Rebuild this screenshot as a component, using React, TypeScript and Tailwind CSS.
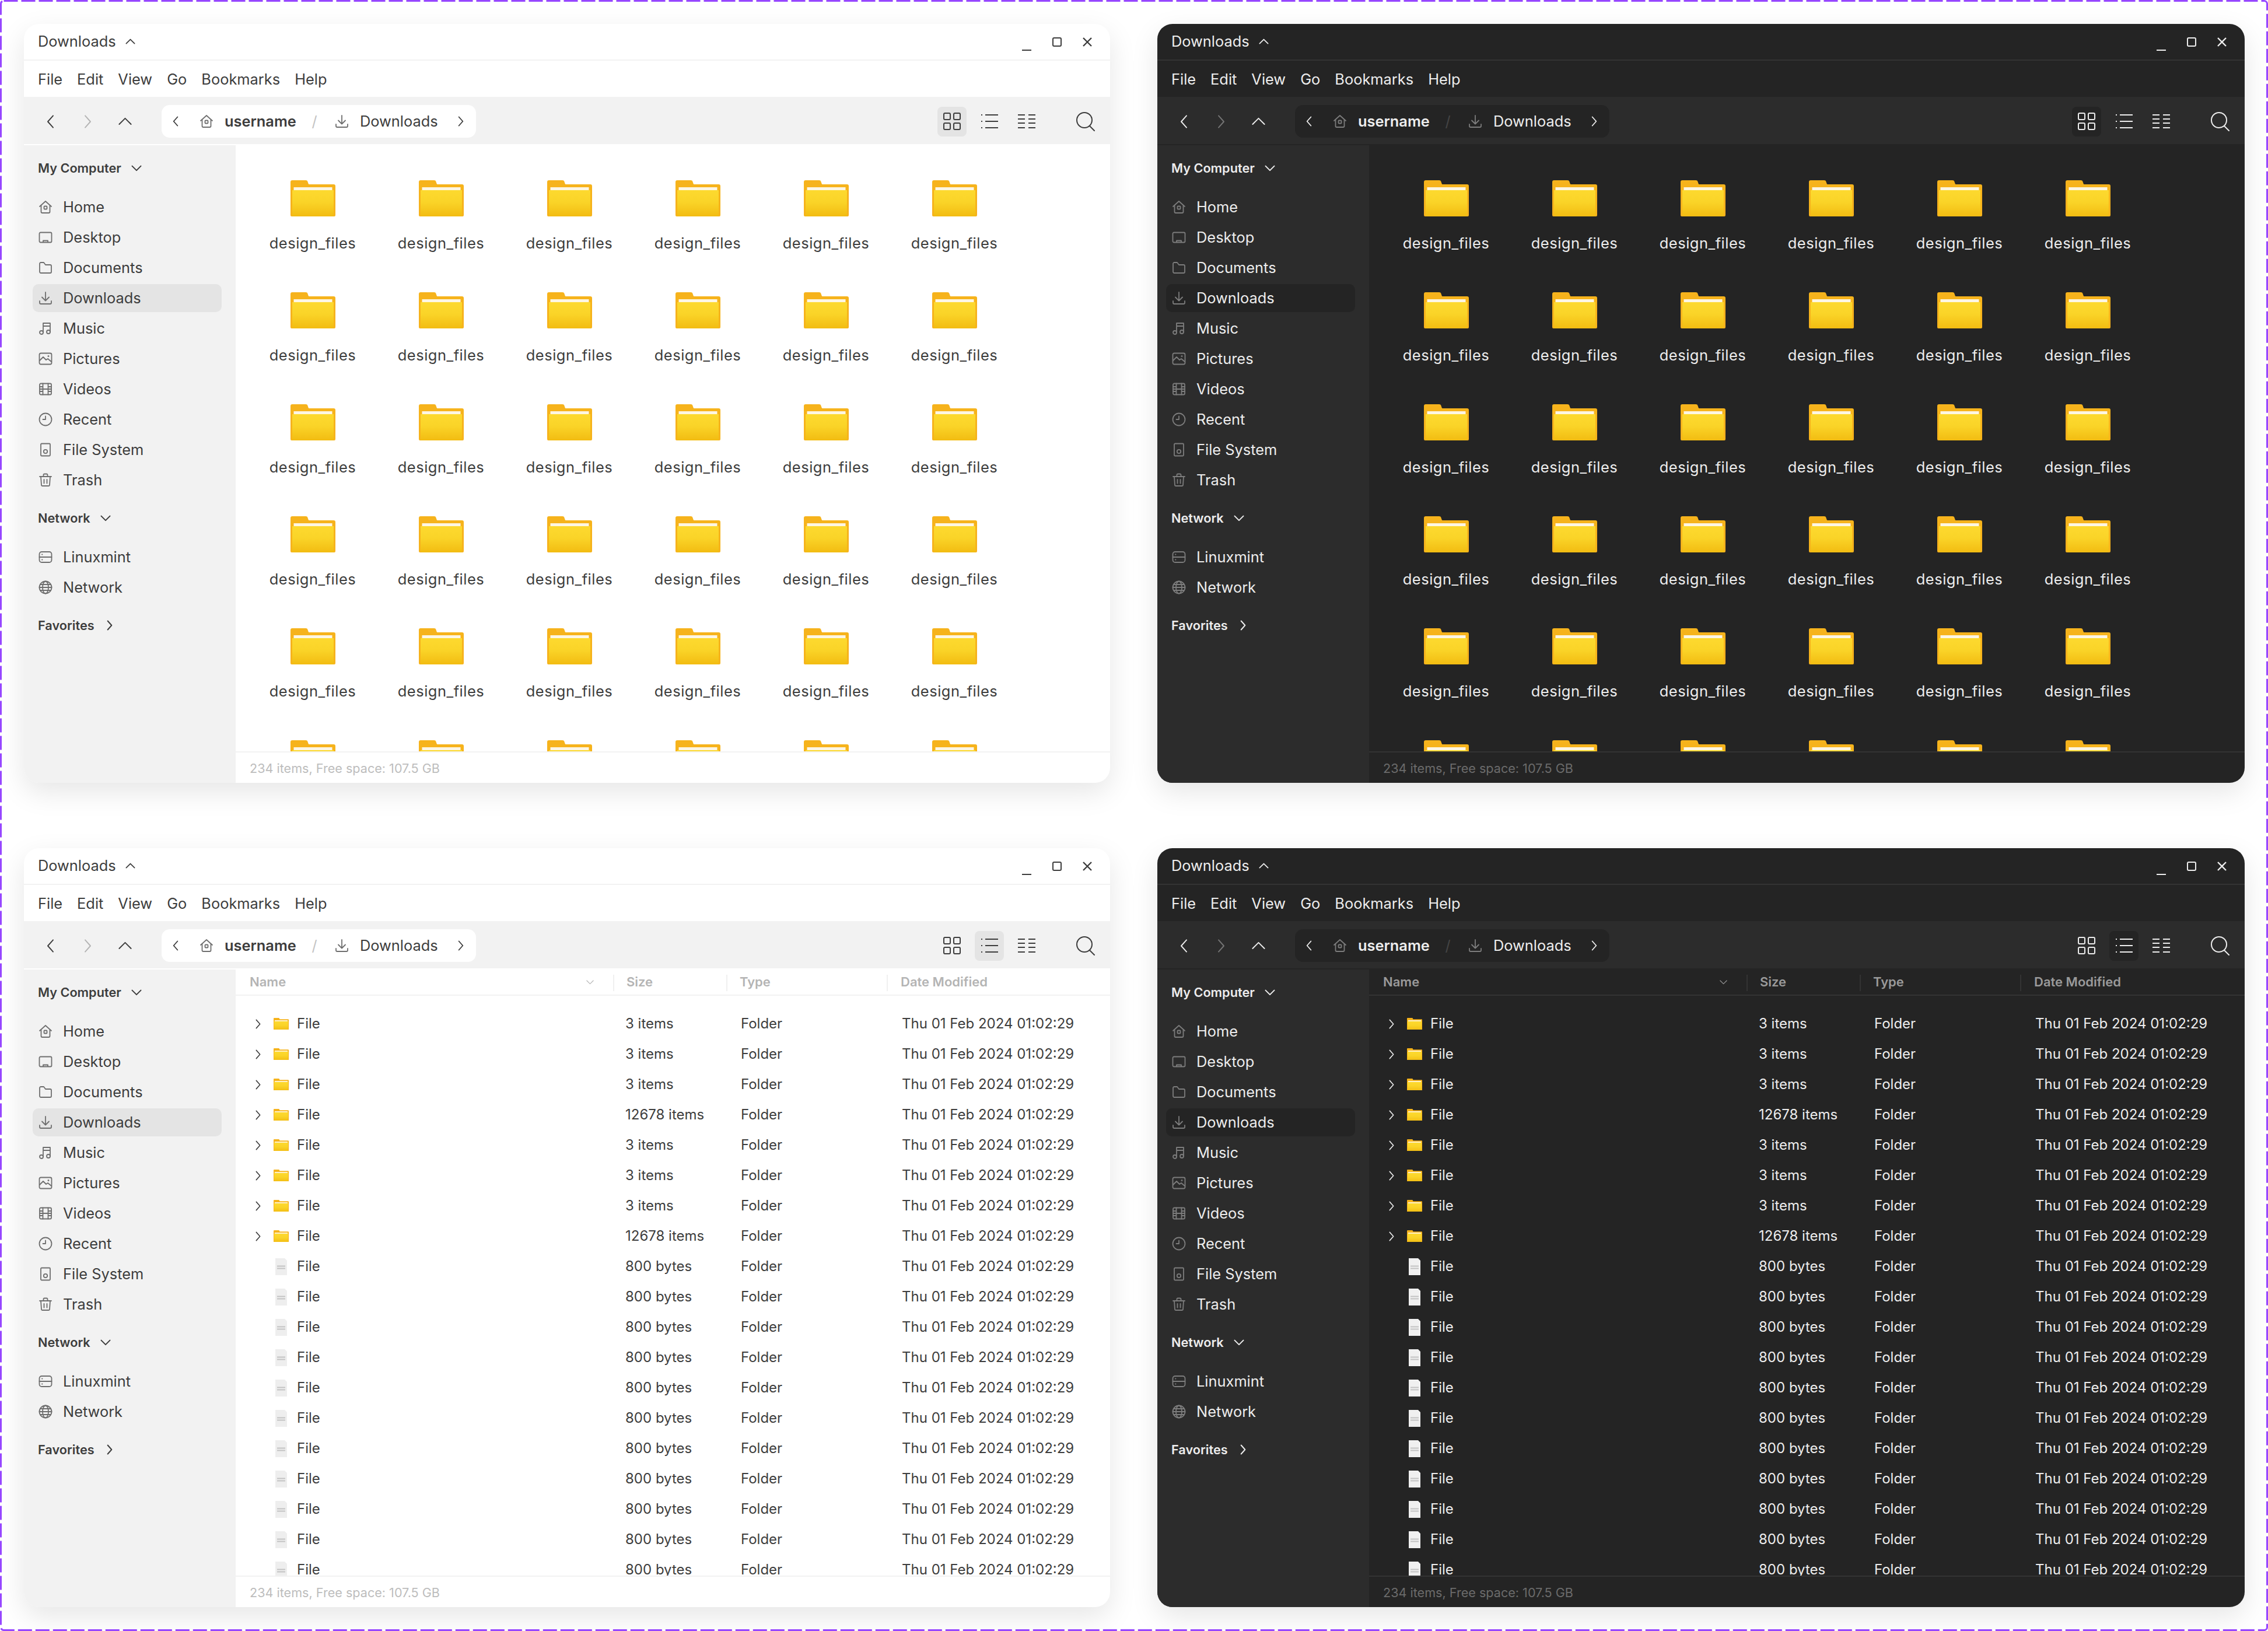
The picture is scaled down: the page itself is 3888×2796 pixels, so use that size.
import React from 'react';

type Mode = 'grid' | 'list';

const lightTheme = {
  width: 'w-[1862px]',
  win: 'bg-white text-[#3d3d3d]',
  line: 'border-[#f2f2f2]',
  bar: 'bg-[#f2f2f2]',
  crumb: 'bg-white',
  slash: 'text-[#c4c4c4]',
  active: 'bg-[#e4e4e4]',
  icon: 'text-[#6e6e6e]',
  dim: 'text-[#b4b4b4]',
  status: 'text-[#bdbdbd]',
  head: 'text-[#b4b4b4]',
  rule: 'bg-[#f0f0f0]',
  control: 'text-[#3d3d3d]',
  file: '#eeeeee',
  fileLine: '#c2c2c2',
};

const darkTheme = {
  width: 'w-[1864px]',
  win: 'bg-[#242424] text-[#ededed]',
  line: 'border-[#333333]',
  bar: 'bg-[#2c2c2c]',
  crumb: 'bg-[#242424]',
  slash: 'text-[#444444]',
  active: 'bg-[#242424]',
  icon: 'text-[#7d7d7d]',
  dim: 'text-[#757575]',
  status: 'text-[#6b6b6b]',
  head: 'text-[#9a9a9a]',
  rule: 'bg-[#333333]',
  control: 'text-[#ededed]',
  file: '#f0f0f0',
  fileLine: '#c2c2c2',
};

type Theme = typeof lightTheme;

const Ico = ({ size = 24, sw = 1.8, children }: { size?: number; sw?: number; children: React.ReactNode }) => (
  <svg
    width={size}
    height={size}
    viewBox="0 0 24 24"
    fill="none"
    stroke="currentColor"
    strokeWidth={sw}
    strokeLinecap="round"
    strokeLinejoin="round"
    className="shrink-0"
  >
    {children}
  </svg>
);

const HomeIcon = () => (
  <Ico>
    <path d="M2 11 12 2l10 9" />
    <path d="M4.5 9.5V20a2 2 0 0 0 2 2h11a2 2 0 0 0 2-2V9.5" />
    <rect x="9.5" y="10.5" width="5" height="5" rx="1" />
  </Ico>
);
const DesktopIcon = () => (
  <Ico>
    <rect x="1.5" y="3.5" width="21" height="17" rx="2" />
    <path d="M8 20v-2.5h8V20" />
  </Ico>
);
const FolderLine = () => (
  <Ico>
    <path d="M2 5a2 2 0 0 1 2-2h5l3 4h8a2 2 0 0 1 2 2v10a2 2 0 0 1-2 2H4a2 2 0 0 1-2-2z" />
  </Ico>
);
const DownloadIcon = () => (
  <Ico>
    <path d="M12 2v14M6 10.5l6 6 6-6" />
    <path d="M2 17v3a2 2 0 0 0 2 2h16a2 2 0 0 0 2-2v-3" />
  </Ico>
);
const MusicIcon = () => (
  <Ico>
    <circle cx="5" cy="19" r="3" />
    <circle cx="17" cy="18" r="3" />
    <path d="M8 19V3h12v15M8 8h12" />
  </Ico>
);
const PicturesIcon = () => (
  <Ico>
    <rect x="1.5" y="2.5" width="21" height="19" rx="2.5" />
    <path d="m2 15 6-6 5 5 3-2 6 5" />
    <circle cx="17" cy="7.5" r="0.6" />
  </Ico>
);
const VideoIcon = () => (
  <Ico>
    <rect x="2" y="2.5" width="20" height="19" rx="2" />
    <path d="M7.5 2.5v19M16.5 2.5v19M2 8h5.5M2 12h20M2 16h5.5M16.5 8H22M16.5 16H22" />
  </Ico>
);
const ClockIcon = () => (
  <Ico>
    <circle cx="12" cy="12" r="10.5" />
    <path d="M12 6.5V12H7.5" />
  </Ico>
);
const DriveIcon = () => (
  <Ico>
    <rect x="4" y="1.5" width="16" height="21" rx="1.5" />
    <circle cx="12" cy="15" r="3.2" />
  </Ico>
);
const TrashIcon = () => (
  <Ico>
    <path d="M2 6h20M8.5 6V3a1.5 1.5 0 0 1 1.5-1.5h4A1.5 1.5 0 0 1 15.5 3v3" />
    <path d="m4 6 1 14.5A1.5 1.5 0 0 0 6.5 22h11a1.5 1.5 0 0 0 1.5-1.5L20 6" />
    <path d="M9.5 11v6.5M14.5 11v6.5" />
  </Ico>
);
const ServerIcon = () => (
  <Ico>
    <rect x="1.5" y="3" width="21" height="18" rx="4" />
    <path d="M1.5 12h21M6 7.5h.5M6 16.5h.5" />
  </Ico>
);
const GlobeIcon = () => (
  <Ico>
    <circle cx="12" cy="12" r="10.5" />
    <path d="M1.5 12h21M3 7h18M3 17h18" />
    <ellipse cx="12" cy="12" rx="5" ry="10.5" />
  </Ico>
);

const Chevron = ({ dir, size = 14, sw = 2.4 }: { dir: 'l' | 'r' | 'u' | 'd'; size?: number; sw?: number }) => {
  const d = { l: 'M16 3 8 12l8 9', r: 'm8 3 8 9-8 9', u: 'm3 16 9-9 9 9', d: 'm3 8 9 9 9-9' }[dir];
  return (
    <Ico size={size} sw={sw}>
      <path d={d} />
    </Ico>
  );
};

const BigFolder = ({ w = 77 }: { w?: number }) => {
  const id = `folderfront${w}`;
  return (
    <svg width={w} height={(w * 62) / 77} viewBox="0 0 77 62" className="shrink-0">
      <defs>
        <linearGradient id={id} x1="0" y1="0" x2="0" y2="1">
          <stop offset="0" stopColor="#fdd92f" />
          <stop offset="0.45" stopColor="#fad428" />
          <stop offset="1" stopColor="#f2bc12" />
        </linearGradient>
      </defs>
      <path
        d="M0 3a3 3 0 0 1 3-3h23c2 0 3 .8 3.5 2.5l1 3c.3 1 1 1.5 2 1.5H74a3 3 0 0 1 3 3v50a2 2 0 0 1-2 2H2a2 2 0 0 1-2-2z"
        fill="#f6b31c"
      />
      <rect x="5.5" y="12" width="66" height="6" fill="#fdf6e3" />
      <path d="M3 17h71v43a2 2 0 0 1-2 2H5a2 2 0 0 1-2-2z" fill={`url(#${id})`} />
    </svg>
  );
};

const FileGlyph = ({ t }: { t: Theme }) => (
  <svg width="20" height="29" viewBox="0 0 20 29" className="shrink-0">
    <path d="M0 0h16l4 4v25H0z" fill={t.file} />
    <path d="M3 13.5h14M3 17.5h14" stroke={t.fileLine} strokeWidth="2" />
  </svg>
);

const GridIcon = () => (
  <svg width="30" height="30" viewBox="0 0 30 30" fill="none" stroke="currentColor" strokeWidth="2" className="shrink-0">
    <rect x="1" y="1" width="11" height="11" rx="2" />
    <rect x="18" y="1" width="11" height="11" rx="2" />
    <rect x="1" y="18" width="11" height="11" rx="2" />
    <rect x="18" y="18" width="11" height="11" rx="2" />
  </svg>
);
const ListIcon = () => (
  <svg width="30" height="26" viewBox="0 0 30 26" fill="none" stroke="currentColor" strokeWidth="2" className="shrink-0">
    <path d="M8 2h22M8 13h22M8 24h22M1 2h2M1 13h2M1 24h2" />
  </svg>
);
const ColumnsIcon = () => (
  <svg width="30" height="26" viewBox="0 0 30 26" fill="none" stroke="currentColor" strokeWidth="2" className="shrink-0">
    <path d="M0 2h12M18 2h12M0 9h12M18 9h12M0 16h12M18 16h12M0 24h12M18 24h12" />
  </svg>
);
const SearchIcon = () => (
  <svg width="34" height="34" viewBox="0 0 34 34" fill="none" stroke="currentColor" strokeWidth="2" strokeLinecap="round" className="shrink-0">
    <circle cx="15" cy="15" r="13" />
    <path d="m24 25 8 8" />
  </svg>
);

const placesA: [string, React.FC][] = [
  ['Home', HomeIcon],
  ['Desktop', DesktopIcon],
  ['Documents', FolderLine],
  ['Downloads', DownloadIcon],
  ['Music', MusicIcon],
  ['Pictures', PicturesIcon],
  ['Videos', VideoIcon],
  ['Recent', ClockIcon],
  ['File System', DriveIcon],
  ['Trash', TrashIcon],
];
const placesB: [string, React.FC][] = [
  ['Linuxmint', ServerIcon],
  ['Network', GlobeIcon],
];

const SideHead = ({ label, open }: { label: string; open: boolean }) => (
  <div className="h-[52px] flex items-center pl-[24px] gap-[16px] text-[21.7px] font-semibold">
    <span>{label}</span>
    <Chevron dir={open ? 'd' : 'r'} size={20} sw={2.4} />
  </div>
);

const SideItem = ({ label, Icon, t }: { label: string; Icon: React.FC; t: Theme }) => (
  <div className="h-[52px] flex items-center">
    <div
      className={`ml-[15px] w-[324px] h-[48px] rounded-[10px] pl-[10px] flex items-center gap-[18px] text-[25.4px] ${
        label === 'Downloads' ? t.active : ''
      }`}
    >
      <span className={t.icon}>
        <Icon />
      </span>
      <span>{label}</span>
    </div>
  </div>
);

const Sidebar = ({ t }: { t: Theme }) => (
  <div className={`w-[363px] shrink-0 pt-[13px] ${t.bar}`}>
    <SideHead label="My Computer" open />
    <div className="mt-[15px]">
      {placesA.map(([label, Icon]) => (
        <SideItem key={label} label={label} Icon={Icon} t={t} />
      ))}
    </div>
    <div className="mt-[13px]">
      <SideHead label="Network" open />
    </div>
    <div className="mt-[15px]">
      {placesB.map(([label, Icon]) => (
        <SideItem key={label} label={label} Icon={Icon} t={t} />
      ))}
    </div>
    <div className="mt-[13px]">
      <SideHead label="Favorites" open={false} />
    </div>
  </div>
);

const IconView = () => (
  <div className="grid grid-cols-[repeat(6,220px)] auto-rows-[192px] pl-[22px] pt-[60px]">
    {Array.from({ length: 36 }).map((_, i) => (
      <div key={i} className="flex flex-col items-center">
        <BigFolder />
        <span className="mt-[31px] text-[25.5px] leading-[30px] tracking-[0.5px]">design_files</span>
      </div>
    ))}
  </div>
);

const folderSizes = ['3 items', '3 items', '3 items', '12678 items', '3 items', '3 items', '3 items', '12678 items'];
const rows = [...folderSizes.map((size) => ({ size, folder: true })), ...Array.from({ length: 11 }).map(() => ({ size: '800 bytes', folder: false }))];

const ListView = ({ t }: { t: Theme }) => (
  <div className="flex flex-col h-full">
    <div className={`h-[45px] shrink-0 border-b-2 ${t.line} grid grid-cols-[647px_194px_275px_1fr] text-[22px] font-semibold ${t.head}`}>
      <div className="flex items-center pl-[24px] pr-[32px] justify-between">
        <span>Name</span>
        <span className={t.head}>
          <Chevron dir="d" size={15} sw={1.8} />
        </span>
      </div>
      {['Size', 'Type', 'Date Modified'].map((h, i) => (
        <div key={h} className="flex items-center relative pl-[23px]">
          <span className={`absolute left-0 top-[9px] bottom-[6px] w-[2px] ${t.rule}`} />
          <span className={i === 2 ? 'ml-[1px]' : ''}>{h}</span>
        </div>
      ))}
    </div>
    <div className="pt-[22px] flex-1 overflow-hidden text-[24px]">
      {rows.map((r, i) => (
        <div key={i} className="h-[52px] grid grid-cols-[647px_194px_275px_1fr] items-center">
          <div className="flex items-center pl-[26px]">
            <span className="w-[24px] flex justify-center">{r.folder && <Chevron dir="r" size={19} sw={2} />}</span>
            <span className="ml-[15px] w-[26px] flex justify-center">{r.folder ? <BigFolder w={26} /> : <FileGlyph t={t} />}</span>
            <span className="ml-[14px]">File</span>
          </div>
          <div className="pl-[21px]">{r.size}</div>
          <div className="pl-[25px]">Folder</div>
          <div className="pl-[26px]">Thu 01 Feb 2024 01:02:29</div>
        </div>
      ))}
    </div>
  </div>
);

const Window = ({ mode, t }: { mode: Mode; t: Theme }) => (
  <div className={`${t.width} h-[1301px] rounded-[26px] overflow-hidden flex flex-col shadow-[0_16px_48px_rgba(0,0,0,0.1)] ${t.win}`}>
    <div className={`h-[63px] shrink-0 flex items-center pl-[24px] pr-[31px] border-b-2 ${t.line} text-[25.4px]`}>
      <span>Downloads</span>
      <span className="ml-[15px]">
        <Chevron dir="u" size={19} sw={2.2} />
      </span>
      <div className={`ml-auto flex items-center gap-[36px] ${t.control}`}>
        <span className="w-[16px] h-[16px] flex items-end translate-y-[7px]">
          <span className="block w-full h-[2px] bg-current" />
        </span>
        <span className="w-[16px] h-[16px] border-[2.5px] border-current rounded-[3px]" />
        <svg width="16" height="16" viewBox="0 0 16 16" stroke="currentColor" strokeWidth="2.4" className="shrink-0">
          <path d="m1 1 14 14M15 1 1 15" />
        </svg>
      </div>
    </div>
    <div className="h-[62px] shrink-0 flex items-center pl-[24px] pt-[2px] gap-[25px] text-[25.4px]">
      {['File', 'Edit', 'View', 'Go', 'Bookmarks', 'Help'].map((m) => (
        <span key={m}>{m}</span>
      ))}
    </div>
    <div className={`h-[81px] shrink-0 flex items-center pl-[13px] pr-[25px] pt-[3px] ${t.bar}`}>
      <span className="w-[64px] flex justify-center">
        <Chevron dir="l" size={27} sw={1.7} />
      </span>
      <span className={`w-[64px] flex justify-center ${t.dim}`}>
        <Chevron dir="r" size={27} sw={1.7} />
      </span>
      <span className="w-[64px] flex justify-center">
        <Chevron dir="u" size={27} sw={1.7} />
      </span>
      <div className={`ml-[31px] w-[539px] h-[56px] rounded-[14px] flex items-center pl-[16px] text-[25.4px] ${t.crumb}`}>
        <span className="w-[16px] flex justify-center">
          <Chevron dir="l" size={20} sw={2.2} />
        </span>
        <span className={`ml-[33px] ${t.icon}`}>
          <HomeIcon />
        </span>
        <span className="ml-[19px] w-[124px] font-semibold">username</span>
        <span className={`ml-[23px] w-[14px] text-center ${t.slash}`}>/</span>
        <span className={`ml-[28px] ${t.icon}`}>
          <DownloadIcon />
        </span>
        <span className="ml-[19px] w-[134px]">Downloads</span>
        <span className="ml-[31px] w-[16px] flex justify-center">
          <Chevron dir="r" size={20} sw={2.2} />
        </span>
      </div>
      <div className="ml-auto flex items-center gap-[14px]">
        <span className={`w-[50px] h-[51px] rounded-[8px] flex items-center justify-center ${mode === 'grid' ? t.active : ''}`}>
          <GridIcon />
        </span>
        <span className={`w-[50px] h-[51px] rounded-[8px] flex items-center justify-center ${mode === 'list' ? t.active : ''}`}>
          <ListIcon />
        </span>
        <span className="w-[50px] h-[51px] rounded-[8px] flex items-center justify-center">
          <ColumnsIcon />
        </span>
      </div>
      <span className="ml-[59px]">
        <SearchIcon />
      </span>
    </div>
    <div className="flex-1 min-h-0 flex pt-[2px]">
      <Sidebar t={t} />
      <div className="flex-1 min-w-0 flex flex-col">
        <div className="flex-1 min-h-0 overflow-hidden">{mode === 'grid' ? <IconView /> : <ListView t={t} />}</div>
        <div className={`h-[54px] shrink-0 border-t-2 ${t.line} flex items-center pl-[24px] pt-[2px] text-[21.6px] ${t.status}`}>
          234 items, Free space: 107.5 GB
        </div>
      </div>
    </div>
  </div>
);

export default function App() {
  return (
    <div className="relative w-[3888px] h-[2796px] bg-white font-['Inter',sans-serif] overflow-hidden">
      <div className="grid grid-cols-[1863px_1864px] gap-x-[80px] gap-y-[112px] pt-[41px] pl-[41px]">
        <Window mode="grid" t={lightTheme} />
        <Window mode="grid" t={darkTheme} />
        <Window mode="list" t={lightTheme} />
        <Window mode="list" t={darkTheme} />
      </div>
      <svg width="3888" height="2796" className="absolute inset-0 pointer-events-none">
        <rect x="1.5" y="1.5" width="3885" height="2793" rx="5" fill="none" stroke="#9747ff" strokeWidth="3" strokeDasharray="24 6" />
      </svg>
    </div>
  );
}
